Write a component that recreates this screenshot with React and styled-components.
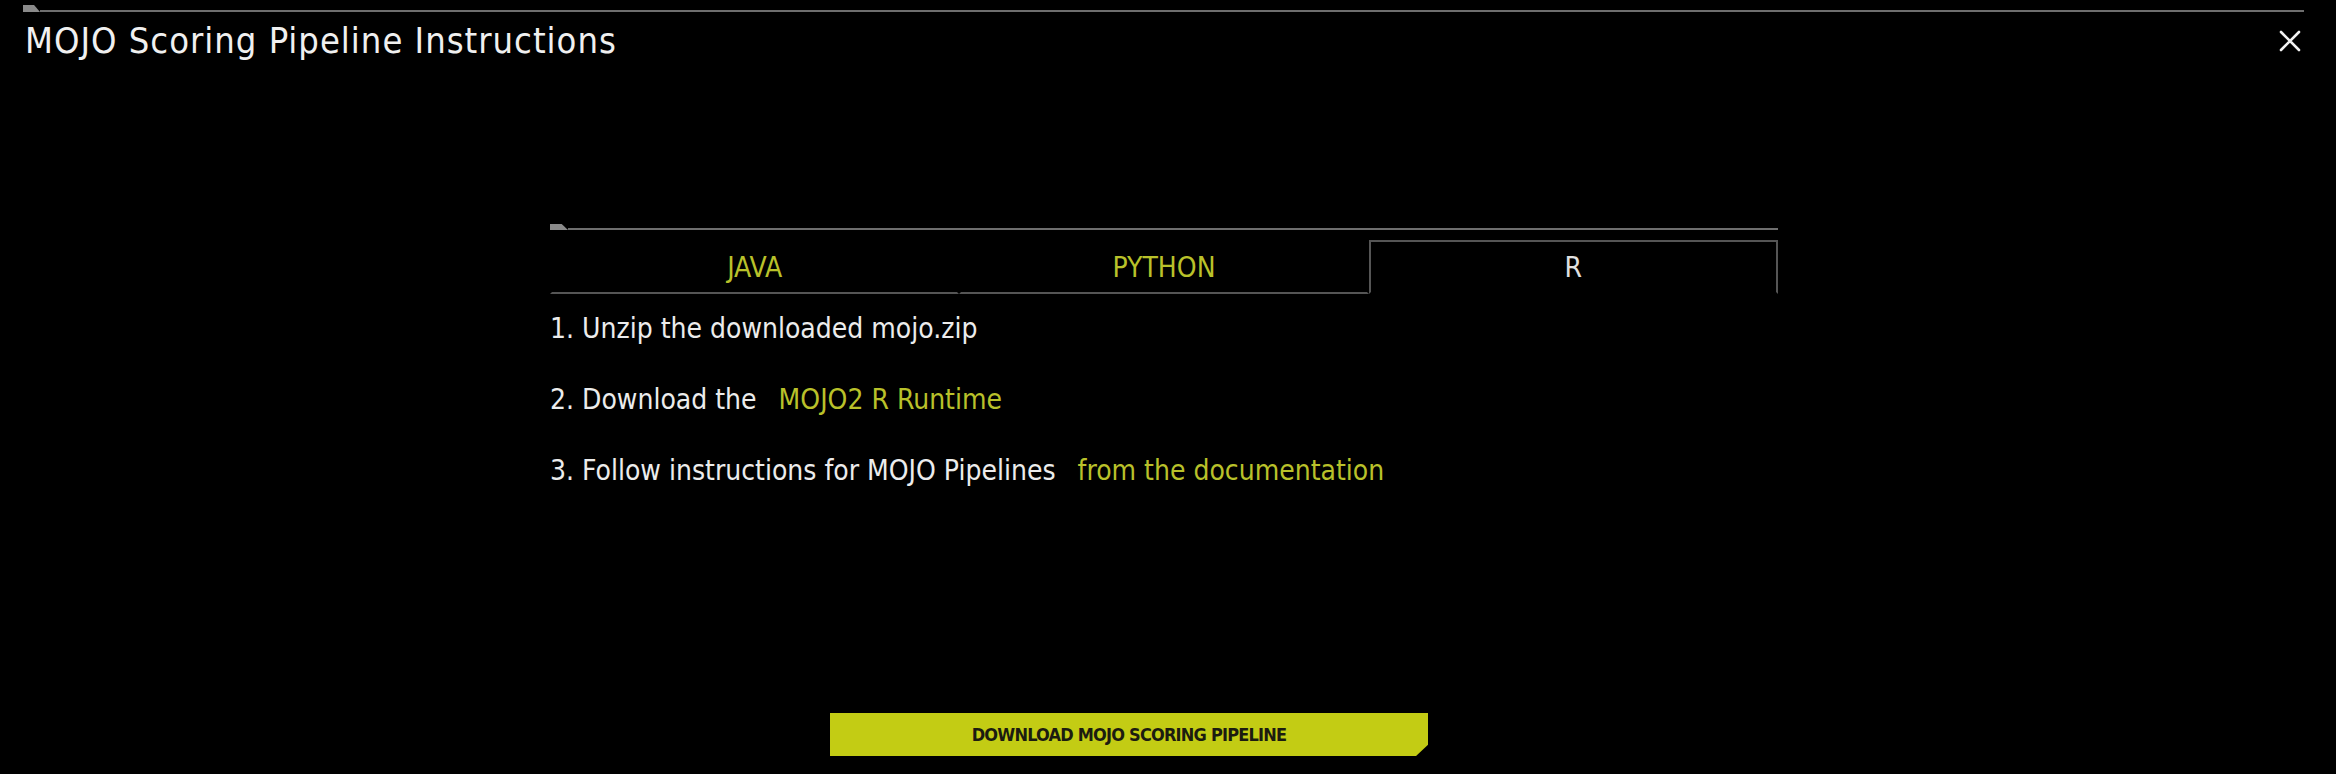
import React, { useState } from "react";
import styled, { createGlobalStyle } from "styled-components";

const GlobalStyle = createGlobalStyle`
  html, body {
    margin: 0;
    padding: 0;
    background: #000;
  }
  body {
    font-family: "DejaVu Sans Condensed", "DejaVu Sans", sans-serif;
    font-stretch: condensed;
    color: #e6e6e6;
  }
`;

const tabs = ["JAVA", "PYTHON", "R"];

export default function App() {
  const [active, setActive] = useState(2);

  return (
    <Page>
      <GlobalStyle />
      <Rule />
      <Header>
        <Title>MOJO Scoring Pipeline Instructions</Title>
        <Close aria-label="close">
          <svg width="22" height="22" viewBox="0 0 22 22">
            <path d="M2 2 L20 20 M20 2 L2 20" stroke="#f2f2f2" strokeWidth="2.6" strokeLinecap="round" />
          </svg>
        </Close>
      </Header>

      <Content>
        <Rule $small />
        <TabRow>
          {tabs.map((t, i) => (
            <Tab key={t} $active={i === active} onClick={() => setActive(i)}>
              {t}
            </Tab>
          ))}
        </TabRow>

        <Steps>
          <Step>1. Unzip the downloaded mojo.zip</Step>
          <Step>
            2. Download the <Link href="#">MOJO2 R Runtime</Link>
          </Step>
          <Step>
            3. Follow instructions for MOJO Pipelines{" "}
            <Link href="#">from the documentation</Link>
          </Step>
        </Steps>

        <Footer>
          <DownloadButton>DOWNLOAD MOJO SCORING PIPELINE</DownloadButton>
        </Footer>
      </Content>
    </Page>
  );
}

const Page = styled.div`
  width: 2336px;
  height: 774px;
  box-sizing: border-box;
  padding: 4px 32px 0 23px;
  display: flex;
  flex-direction: column;
  overflow: hidden;
`;

const Rule = styled.div`
  display: flex;
  align-items: flex-end;
  height: ${(p) => (p.$small ? "7px" : "8px")};

  &::before {
    content: "";
    width: ${(p) => (p.$small ? "18px" : "17px")};
    height: ${(p) => (p.$small ? "6px" : "7px")};
    background: #8a8a8a;
    clip-path: polygon(0 0, 65% 0, 100% 100%, 0 100%);
  }
  &::after {
    content: "";
    flex: 1;
    height: 2px;
    background: #6e6e6e;
  }
`;

const Header = styled.div`
  display: flex;
  justify-content: space-between;
  align-items: flex-start;
  padding: 9px 3px 0 2px;
`;

const Title = styled.h1`
  margin: 0;
  font-size: 36px;
  font-weight: normal;
  line-height: 40px;
  color: #f0f0f0;
  letter-spacing: 1px;
`;

const Close = styled.button`
  background: none;
  border: none;
  padding: 0;
  margin-top: 9px;
  width: 22px;
  height: 22px;
  cursor: pointer;
  display: flex;
`;

const Content = styled.div`
  width: 1228px;
  margin: 162px 0 0 527px;
  display: flex;
  flex-direction: column;
`;

const TabRow = styled.div`
  display: grid;
  grid-template-columns: repeat(3, 1fr);
  margin-top: 10px;
`;

const Tab = styled.button`
  height: 54px;
  box-sizing: border-box;
  background: none;
  font-family: inherit;
  font-stretch: condensed;
  font-size: 28px;
  padding: 0;
  cursor: pointer;
  color: ${(p) => (p.$active ? "#e0e0e0" : "#b9c12a")};
  border: 2px solid ${(p) => (p.$active ? "#555" : "transparent")};
  border-bottom: 2px solid ${(p) => (p.$active ? "transparent" : "#555")};
`;

const Steps = styled.ol`
  list-style: none;
  margin: 20px 0 0;
  padding: 0;
  display: flex;
  flex-direction: column;
  gap: 41px;
`;

const Step = styled.li`
  font-size: 28px;
  line-height: 30px;
  color: #ececec;
  white-space: pre;
`;

const Link = styled.a`
  color: #b9c12a;
  text-decoration: none;
  margin-left: 14px;
`;

const Footer = styled.div`
  display: flex;
  padding-left: 280px;
  margin-top: 227px;
`;

const DownloadButton = styled.button`
  width: 598px;
  height: 43px;
  border: none;
  background: #c3cc14;
  color: #1c1c10;
  font-family: inherit;
  font-stretch: condensed;
  font-weight: bold;
  font-size: 18px;
  letter-spacing: -0.8px;
  cursor: pointer;
  clip-path: polygon(0 0, 100% 0, 100% 74%, 98% 100%, 0 100%);
`;
